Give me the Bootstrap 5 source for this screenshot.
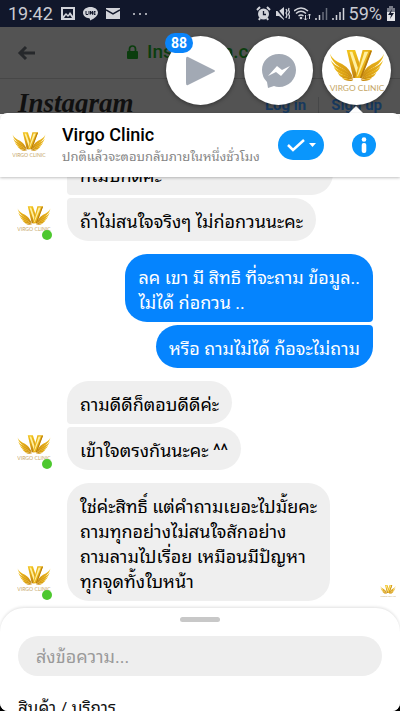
<!DOCTYPE html>
<html lang="th">
<head>
<meta charset="utf-8">
<meta name="viewport" content="width=device-width, initial-scale=1">
<title>Virgo Clinic</title>
<link rel="stylesheet" href="https://cdn.jsdelivr.net/npm/bootstrap@5.3.0/dist/css/bootstrap.min.css">
<style>
body{font-family:Roboto,"Noto Sans Thai Looped","Loma","Waree","Noto Sans Thai","Noto Sans",sans-serif;background:#000}
.screen{height:100vh;background:#fff;border-radius:0 0 8px 8px}
.statusbar{height:27px;background:#11172b;color:#c9cbd2;font-size:18px;line-height:27px}
.browser{height:87px;background:#535353}
.urlbar{height:52px;border-bottom:1px solid #474747}
.back{width:20px;height:20px;margin-left:17px;color:#26282b}
.site{margin-left:89px;color:#0b3d0e;font-size:19px;font-weight:500}
.sitebar{height:35px;padding-left:18px}
.wordmark{font-family:"Liberation Serif",serif;font-style:italic;font-weight:700;font-size:27px;line-height:48px;color:#101010}
.auth{padding:14px 18px 0 0}
.auth a{color:#17395e;font-size:15px;line-height:24px;font-weight:700}
.heads{top:36px;right:9px;gap:9px;z-index:5}
.head-btn{width:69px;height:69px;background:#fff;box-shadow:0 1px 4px rgba(0,0,0,.4)}
.count{left:-1px;top:-3px;height:20px;padding:0 6px;background:#0a84fa;font-size:14px;line-height:20px;font-weight:700}
.pointer{right:36px;bottom:0;width:0;border:8px solid transparent;border-top:0;border-bottom:8px solid #fff}
.sheet-top{min-height:64px;background:#fff;border-radius:7px 7px 0 0;margin-top:-1px;box-shadow:0 1px 3px rgba(0,0,0,.25);z-index:3}
.peer-box{margin-left:12px}
.peer{font-size:18px;line-height:22px;font-weight:500;color:#000}
.reply-time{font-size:13px;line-height:18px;padding-top:2px;color:#858585}
.mark-btn{width:46px;height:30px;background:#0a96fc}
.thread{background:#fff;padding-bottom:7px;gap:13px}
.group{gap:3px}
.side{width:67px;padding:0 15px 1px 17px}
.face{height:34px}
.dot{right:0;bottom:0;width:10px;height:10px;background:#4dc82f}
.bubble{background:#efefef;color:#000;font-size:18px;line-height:25px;padding:11px 13px 7px;border-radius:22px;max-width:280px}
.wide{width:266px}
.above{border-bottom-left-radius:4px}
.below{border-top-left-radius:4px}
.sent{padding-right:27px}
.mine{background:#0584fe;color:#fff}
.mine.above{border-radius:22px 22px 4px 22px}
.mine.below{border-radius:22px 4px 22px 22px}
.composer{height:103px;padding:9px 18px 0;background:#fff;border-radius:24px 24px 0 0;box-shadow:0 -1px 3px rgba(0,0,0,.12)}
.grip{width:40px;height:5px;background:#c8c8c8}
.msg-input{height:40px;margin-top:14px;padding:0 18px;background:#eee;font-size:18px}
.msg-input::placeholder{color:#9a9a9a}
.shop{margin-top:20px;font-size:17px;line-height:25px;color:#111}
</style>
<script src="https://cdn.jsdelivr.net/npm/bootstrap@5.3.0/dist/js/bootstrap.bundle.min.js"></script>
</head>
<body>
<svg width="0" height="0" class="position-absolute" aria-hidden="true">
  <defs>
    <linearGradient id="gold" x1="0" y1="0" x2="0" y2="1"><stop offset="0" stop-color="#f3c51b"/><stop offset=".5" stop-color="#dfa516"/><stop offset="1" stop-color="#bd8110"/></linearGradient>
    <g id="wing" fill="url(#gold)">
      <path d="M1 4Q4 11 14 15Q23 20 26 31Q20 22 11 18Q3 13 1 4Z"/>
      <path d="M2 11Q5 16 13 19Q22 23 26 31Q19 25 11 22Q4 18 2 11Z"/>
      <path d="M5 18Q8 21 14 23Q22 26 26 32Q19 28 13 26Q7 23 5 18Z"/>
      <path d="M9 24Q12 26 17 27Q23 29 26 32Q20 31 15 30Q11 28 9 24Z"/>
      <path d="M14 30Q20 30 26 33Q18 34 14 30Z"/>
    </g>
    <symbol id="virgo" viewBox="0 0 60 45">
      <use href="#wing"/><use href="#wing" transform="translate(60 0) scale(-1 1)"/>
      <path fill="url(#gold)" d="M19 0H28L34 18L31 30H26Z"/>
      <path fill="#fff0a0" d="M22 2H25L32 22L30 27Z"/>
      <path fill="#eab51a" d="M36 0H46L35 30H28Z"/>
      <path fill="#fff0a0" d="M38 2H42L31 28H30Z"/>
      <path fill="#b97c0c" d="M44 1H46L35 30H33Z"/>
      <text x="30" y="44" text-anchor="middle" font-family="Lato, sans-serif" font-size="9" fill="#c5a665">VIRGO CLINIC</text>
    </symbol>
  </defs>
</svg>
<main class="screen d-flex flex-column overflow-hidden position-relative">
  <div class="statusbar d-flex align-items-center flex-shrink-0 ps-2 pe-1">
    <span>19:42</span>
    <svg class="ms-2" width="14" height="13" viewBox="0 0 14 13"><path fill="#d2d4da" fill-rule="evenodd" d="M0 0H14V13H0ZM2 2V9L5 6L7 8L9 5L12 9V2ZM3 11H11L9 8L7 10L5 8Z"/></svg>
    <svg class="ms-2" width="15" height="15" viewBox="0 0 15 15"><path fill="#d2d4da" d="M7.500 1C3.400 1 0 3.400 0 6.700C0 9.600 2.700 11.900 6.300 12.300Q7.300 12.600 7 14.500Q14.900 10.700 15 6.700C15 3.400 11.600 1 7.500 1Z"/><path stroke="#11172b" fill="none" d="M3 5V8.500H5M6 5V8.500M7.500 8.500V5L9.500 8.500V5M12.500 5.500H11V8.500H12.500M11 7H12.500"/></svg>
    <svg class="ms-2" width="14" height="11" viewBox="0 0 14 11"><path fill="#d2d4da" d="M0 0H14V11H0Z"/><path d="M0 2L7 6L14 2" fill="none" stroke="#11172b" stroke-width="1.500"/></svg>
    <svg class="ms-2" width="22" height="4" viewBox="0 0 22 4"><g fill="#d2d4da"><circle cx="6" cy="2" r="1"/><circle cx="12" cy="2" r="1"/><circle cx="18" cy="2" r="1"/></g></svg>
    <svg class="ms-auto" width="15" height="15" viewBox="0 0 15 15"><circle cx="7.500" cy="8" r="5.500" fill="#d2d4da"/><path fill="none" stroke="#d2d4da" stroke-width="2" d="M1 4L4 1M14 4L11 1M3 14L4 12M12 14L11 12"/><path fill="none" stroke="#11172b" stroke-width="1.300" d="M7.500 5V8.500H10"/></svg>
    <svg class="ms-1" width="15" height="15" viewBox="0 0 15 15"><path fill="#d2d4da" d="M1 5H4L9 1V14L4 10H1Z"/><path stroke="#11172b" stroke-width="1.500" d="M1 2L10 13"/><path fill="none" stroke="#d2d4da" stroke-width="1.300" d="M11 3L12 5L11 7L12 9L11 12M14 2L13.500 4L14.500 6L13.500 8L14.500 10L14 13"/></svg>
    <svg class="ms-1" width="17" height="15" viewBox="0 0 17 15"><path fill="none" stroke="#d2d4da" stroke-width="1.500" d="M0 5Q7 -1 14 5M2 7.500Q7 3 12 7.500M4.500 10Q7 8 9.500 10"/><circle cx="7" cy="12" r="1.300" fill="#d2d4da"/><path fill="none" stroke="#d2d4da" d="M11.500 9V14M10 12.500L11.500 14L13 12.500M15.500 13V8M14 9.500L15.500 8L17 9.500"/></svg>
    <svg class="ms-1" width="13" height="13" viewBox="0 0 13 13"><path stroke="#d2d4da" stroke-width="1.500" d="M1 13V11M4.500 13V8"/><path stroke="#6a6f7d" stroke-width="1.500" d="M8 13V5M11.500 13V1"/></svg>
    <svg class="ms-1" width="13" height="13" viewBox="0 0 13 13"><path stroke="#d2d4da" stroke-width="1.500" d="M1 13V11M4.500 13V8M8 13V5M11.500 13V1"/></svg>
    <span class="ms-1">59%</span>
    <svg class="ms-1" width="10" height="15" viewBox="0 0 10 15"><path fill="#777b88" d="M3 0H7V2H9V7H1V2H3Z"/><path fill="#e2e3e7" d="M1 6H9V15H1Z"/><path fill="#11172b" d="M6 3L2 9H5L4 13L8 7H5Z"/></svg>
  </div>

  <div class="browser flex-shrink-0 position-relative">
    <div class="urlbar d-flex align-items-center">
      <svg class="back" viewBox="0 0 20 20"><path d="M18 10H3M9 4L3 10L9 16" fill="none" stroke="currentColor" stroke-width="3"/></svg>
      <div class="site d-flex align-items-center gap-2">
        <svg width="13" height="15" viewBox="0 0 13 15"><rect x="1" y="6" width="11" height="8" rx="1" fill="#0b3d0e"/><path d="M3.500 7V4A3 3 0 0 1 9.500 4V7" fill="none" stroke="#0b3d0e" stroke-width="1.700"/></svg>
        <span>Instagram.com</span>
      </div>
    </div>
    <div class="sitebar d-flex justify-content-between">
      <span class="wordmark">Instagram</span>
      <div class="auth d-flex align-items-start gap-2">
        <a class="text-decoration-none" href="#">Log in</a><span class="vr mt-1 mx-1"></span><a class="text-decoration-none" href="#">Sign up</a>
      </div>
    </div>
    <span class="pointer position-absolute"></span>
  </div>

  <nav class="heads d-flex position-absolute" aria-label="Chats">
    <button type="button" class="head-btn btn border-0 rounded-circle p-0 position-relative" aria-label="Video">
      <svg width="31" height="32" viewBox="0 0 31 32"><path d="M3 2L29 15Q31 16 29 17L3 30Q1 31 1 28V4Q1 1 3 2Z" fill="#a2a9b4"/></svg>
      <span class="count position-absolute rounded-pill text-white">88</span>
    </button>
    <button type="button" class="head-btn btn border-0 rounded-circle p-0" aria-label="Messenger">
      <svg width="36" height="36" viewBox="0 0 36 36"><path fill="#a2a9b4" d="M18 1C8 1 1 8 1 17Q1 24 6 29L7 35L13 33Q15 34 18 34C28 34 35 26 35 17S28 1 18 1Z"/><path fill="#fff" d="M7 23L16 13L21 17L29 13L20 23L15 19Z"/></svg>
    </button>
    <button type="button" class="head-btn btn border-0 rounded-circle p-0" aria-label="Virgo Clinic">
      <svg width="56" height="42"><use href="#virgo"/></svg>
    </button>
  </nav>

  <header class="sheet-top d-flex align-items-center flex-shrink-0 position-relative ps-2 pe-4">
    <svg class="mx-1 flex-shrink-0" width="34" height="26"><use href="#virgo"/></svg>
    <div class="peer-box flex-grow-1">
      <div class="peer">Virgo Clinic</div>
      <div class="reply-time text-nowrap">ปกติแล้วจะตอบกลับภายในหนึ่งชั่วโมง</div>
    </div>
    <button type="button" class="mark-btn btn border-0 rounded-pill p-0 d-flex align-items-center justify-content-center gap-1" aria-label="Mark as done">
      <svg width="18" height="14" viewBox="0 0 18 14"><path d="M1 7L6 12L17 2" fill="none" stroke="#fff" stroke-width="2.500"/></svg>
      <svg width="7" height="4" viewBox="0 0 7 4"><path d="M0 0H7L3.500 4Z" fill="#fff"/></svg>
    </button>
    <button type="button" class="btn border-0 p-0 ms-4 d-flex" aria-label="Info">
      <svg class="ms-1" width="24" height="24" viewBox="0 0 24 24"><circle cx="12" cy="12" r="12" fill="#0a96fc"/><circle cx="12" cy="6.500" r="2.300" fill="#fff"/><rect x="9.700" y="10" width="4.600" height="10" rx="2" fill="#fff"/></svg>
    </button>
  </header>

  <section class="thread flex-grow-1 d-flex flex-column justify-content-end overflow-hidden">
    <div class="d-flex align-items-end flex-shrink-0">
      <div class="side flex-shrink-0"><div class="face position-relative"><svg class="d-block" width="34" height="26"><use href="#virgo"/></svg><span class="dot position-absolute rounded-circle"></span></div></div>
      <div class="group d-flex flex-column align-items-start">
        <div class="bubble above wide">ก็ไม่ปกติค่ะ</div>
        <div class="bubble below">ถ้าไม่สนใจจริงๆ ไม่ก่อกวนนะคะ</div>
      </div>
    </div>
    <div class="group sent d-flex flex-column align-items-end flex-shrink-0">
      <div class="bubble mine above">ลค เขา มี สิทธิ ที่จะถาม ข้อมูล..<br>ไม่ได้ ก่อกวน ..</div>
      <div class="bubble mine below">หรือ ถามไม่ได้ ก้อจะไม่ถาม</div>
    </div>
    <div class="d-flex align-items-end flex-shrink-0">
      <div class="side flex-shrink-0"><div class="face position-relative"><svg class="d-block" width="34" height="26"><use href="#virgo"/></svg><span class="dot position-absolute rounded-circle"></span></div></div>
      <div class="group d-flex flex-column align-items-start">
        <div class="bubble above">ถามดีดีก็ตอบดีดีค่ะ</div>
        <div class="bubble below">เข้าใจตรงกันนะคะ ^^</div>
      </div>
    </div>
    <div class="d-flex align-items-end flex-shrink-0">
      <div class="side flex-shrink-0"><div class="face position-relative"><svg class="d-block" width="34" height="26"><use href="#virgo"/></svg><span class="dot position-absolute rounded-circle"></span></div></div>
      <div class="bubble">ใช่ค่ะสิทธิ์ แต่คำถามเยอะไปมั้ยคะ<br>ถามทุกอย่างไม่สนใจสักอย่าง<br>ถามลามไปเรื่อย เหมือนมีปัญหา<br>ทุกจุดทั้งใบหน้า</div>
      <svg class="ms-auto me-1 mb-1" width="16" height="12"><use href="#virgo"/></svg>
    </div>
  </section>

  <footer class="composer flex-shrink-0 position-relative overflow-hidden">
    <div class="grip rounded-pill mx-auto"></div>
    <input class="msg-input form-control border-0 rounded-pill" type="text" placeholder="ส่งข้อความ..." aria-label="ส่งข้อความ">
    <div class="shop">สินค้า / บริการ</div>
  </footer>
</main>
</body>
</html>
